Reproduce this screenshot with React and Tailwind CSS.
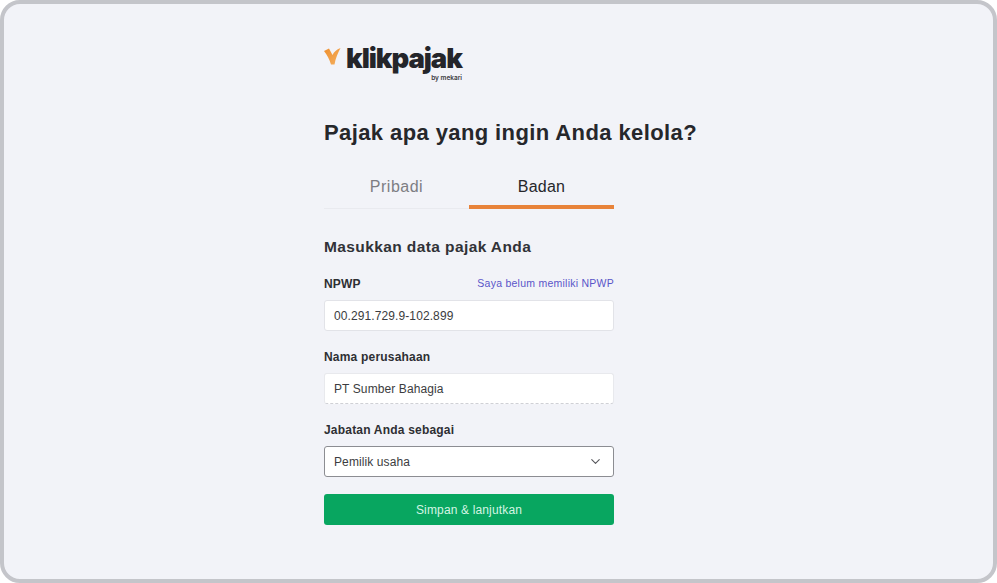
import { ChevronDown } from 'lucide-react';

const Logo = () => (
  <div className="flex flex-col items-start w-[139px]">
    <div className="flex items-center h-[30px]">
      <svg width="17" height="18" viewBox="0 0 17 18" className="mr-[5px] -mt-[5px]">
        <defs>
          <linearGradient id="tick" x1="0" y1="0" x2="1" y2="1">
            <stop offset="0" stopColor="#ee8f2e" />
            <stop offset="1" stopColor="#f5b060" />
          </linearGradient>
        </defs>
        <path d="M0 4 L5 1.5 L8.5 8 C10 5 12.5 2.5 16.5 1 C14 6 11.5 11 10.5 17.5 L7 17.5 C5.5 12 3 8 0 4 Z" fill="url(#tick)" />
      </svg>
      <span className="font-['Inter',sans-serif] font-black text-[27.5px] leading-[30px] tracking-[-1.05px] text-[#24252a]">klikpajak</span>
    </div>
    <div className="mt-[2px] w-full text-right font-['Inter',sans-serif] font-semibold text-[6.5px] leading-[7px] text-[#3a3b40] pr-[1px]">by mekari</div>
  </div>
);

const Field = ({ label, value, extra, dashed }) => (
  <div>
    <div className="flex items-center justify-between h-[17px] mb-[8px]">
      <label className="text-[12px] font-semibold tracking-[0.2px] text-[#2e2f33]">{label}</label>
      {extra && <a className="text-[10.5px] tracking-[0.25px] text-[#5a55c8]">{extra}</a>}
    </div>
    <div
      className={
        dashed
          ? 'h-[31px] flex items-center px-[9px] bg-white rounded-[3px] border border-[#e8e9ed] border-b-[#cfd0d5] [border-bottom-style:dashed] text-[12px] tracking-[0.1px] text-[#3b3c40]'
          : 'h-[31px] flex items-center px-[9px] bg-white rounded-[3px] border border-[#e2e3e8] text-[12px] tracking-[0.1px] text-[#3b3c40]'
      }
    >
      {value}
    </div>
  </div>
);

export default function App() {
  return (
    <div className="w-[997px] h-[583px] overflow-hidden bg-white font-['Liberation_Sans',sans-serif]">
      <div className="w-full h-full flex justify-center rounded-[20px] border-[4px] border-[#c4c5ca] bg-[#f2f3f8]">
        <div className="w-[290px] mr-[59px] pt-[39px] flex flex-col">
          <Logo />

          <h1 className="mt-[37px] w-[400px] text-[22px] leading-[28px] font-bold tracking-[0.4px] text-[#26272b]">
            Pajak apa yang ingin Anda kelola?
          </h1>

          {/* tabs */}
          <div className="mt-[24px] grid grid-cols-2 h-[38px] border-b border-[#e9eaef]">
            <div className="flex justify-center pt-[4px] text-[16px] tracking-[0.5px] text-[#7d7e83]">Pribadi</div>
            <div className="flex justify-center pt-[4px] h-[38px] border-b-[4px] border-[#e8833a] text-[16px] tracking-[0.2px] text-[#26272b]">Badan</div>
          </div>

          <h2 className="mt-[28px] text-[15.5px] leading-[20px] font-bold tracking-[0.4px] text-[#313237]">Masukkan data pajak Anda</h2>

          <div className="mt-[18px] flex flex-col gap-[17px]">
            <Field label="NPWP" value="00.291.729.9-102.899" extra="Saya belum memiliki NPWP" />
            <Field label="Nama perusahaan" value="PT Sumber Bahagia" dashed />
            <div>
              <div className="flex items-center h-[17px] mb-[8px]">
                <label className="text-[12px] font-semibold tracking-[0.2px] text-[#2e2f33]">Jabatan Anda sebagai</label>
              </div>
              <div className="h-[31px] flex items-center justify-between pl-[9px] pr-[10px] bg-white rounded-[3px] border border-[#8c8d92] text-[12px] tracking-[0.1px] text-[#3b3c40]">
                Pemilik usaha
                <ChevronDown size={15} strokeWidth={1.75} className="text-[#55565b]" />
              </div>
            </div>
          </div>

          <button className="mt-[17px] h-[31px] w-full rounded-[3px] bg-[#08a660] text-[12px] tracking-[0.15px] text-[#d5f5e4]">
            Simpan &amp; lanjutkan
          </button>
        </div>
      </div>
    </div>
  );
}
